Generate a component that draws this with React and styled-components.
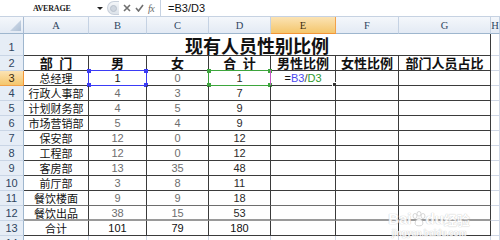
import React from "react";
import styled, { createGlobalStyle, css } from "styled-components";

const GlobalStyle = createGlobalStyle`
  html, body { margin: 0; padding: 0; background: #fff; overflow: hidden; }
  #root { width: 500px; height: 240px; }
`;

const Window = styled.div`
  width: 500px;
  height: 240px;
  overflow: hidden;
  position: relative;
  background: #fff;
  font-family: "Liberation Sans", "Noto Sans CJK SC", sans-serif;
`;

/* ---------- formula bar ---------- */
const FormulaBar = styled.div`
  display: flex;
  height: 17px;
  box-sizing: border-box;
  border-bottom: 1px solid #c6d2e2;
  background: #fff;
`;

const NameBox = styled.div`
  width: 106px;
  display: flex;
  align-items: center;
  box-sizing: border-box;
  padding-left: 33px;
  font-family: "Liberation Serif", serif;
  font-size: 8px;
  font-weight: bold;
  letter-spacing: -0.2px;
  color: #222;
  position: relative;
`;

const DropArrow = styled.span`
  position: absolute;
  left: 97px;
  top: 7px;
  width: 0;
  height: 0;
  border-left: 3px solid transparent;
  border-right: 3px solid transparent;
  border-top: 3px solid #222;
`;

const ButtonArea = styled.div`
  width: 54px;
  display: flex;
  align-items: center;
  gap: 4px;
  box-sizing: border-box;
  padding-left: 1px;
`;

const Grip = styled.div`
  width: 12px;
  height: 14px;
  border-radius: 7px 0 0 7px;
  background: linear-gradient(#f4f6f9, #dde3ea);
  border: 1px solid #c9d1dc;
  border-right: none;
  box-sizing: border-box;
  display: flex;
  align-items: center;
  justify-content: center;
  &::after {
    content: "";
    width: 5px;
    height: 5px;
    border-radius: 50%;
    background: #cfd6df;
    border: 1px solid #b9c2cd;
  }
`;

const IconSvg = styled.svg`
  display: block;
  flex: none;
`;

const FxText = styled.span`
  font-family: "Liberation Serif", serif;
  font-style: italic;
  font-size: 10px;
  color: #6a6a6a;
  letter-spacing: -0.5px;
`;

const FormulaInput = styled.div`
  flex: 1;
  border-left: 1px solid #c6d2e2;
  padding-left: 7px;
  font-size: 11px;
  line-height: 16px;
  color: #111;
`;

/* ---------- sheet ---------- */
const Sheet = styled.div`
  display: grid;
  grid-template-columns: 24px 65px 58px 62px 62px 65px 63px 92px 1fr;
  grid-template-rows: 17px 22px repeat(13, 15px);
  position: relative;
`;

const headerBg = css`
  background: linear-gradient(#f4f7fb, #e3eaf4);
  color: #2f4560;
`;

const activeHeader = css`
  background: linear-gradient(#fbe3b4, #f4c66c);
  color: #3a2c10;
`;

const Corner = styled.div`
  ${headerBg};
  box-sizing: border-box;
  border-right: 1px solid #a9bcd3;
  border-bottom: 1px solid #9eb6ce;
  position: relative;
  &::after {
    content: "";
    position: absolute;
    right: 2px;
    bottom: 2px;
    width: 11px;
    height: 11px;
    background: linear-gradient(135deg, #d9e3ef, #aebfd4);
    clip-path: polygon(100% 0, 100% 100%, 0 100%);
  }
`;

const ColHeader = styled.div`
  ${(p) => (p.$active ? activeHeader : headerBg)};
  box-sizing: border-box;
  border-right: 1px solid ${(p) => (p.$active ? "#f2a14a" : "#c5d2e3")};
  border-bottom: 1px solid ${(p) => (p.$active ? "#f29536" : "#9eb6ce")};
  display: flex;
  align-items: center;
  justify-content: center;
  font-family: "Liberation Serif", serif;
  font-size: 10.5px;
`;

const RowHeader = styled.div`
  ${(p) => (p.$active ? activeHeader : headerBg)};
  background: ${(p) => (p.$active ? "linear-gradient(#fbe3b4, #f4c66c)" : "#e6edf6")};
  box-sizing: border-box;
  border-right: 1px solid ${(p) => (p.$active ? "#f29536" : "#9eb6ce")};
  border-bottom: 1px solid ${(p) => (p.$active ? "#f2a14a" : "#c9d5e5")};
  display: flex;
  align-items: ${(p) => (p.$tall ? "flex-end" : "center")};
  justify-content: center;
  font-size: 11px;
  line-height: 14px;
  padding-bottom: ${(p) => (p.$tall ? "1px" : "0")};
  overflow: hidden;
`;

const Cell = styled.div`
  box-sizing: border-box;
  border-right: 1px solid ${(p) => (p.$table ? "#3b3b3b" : "#d0d7e5")};
  border-bottom: ${(p) =>
    p.$bottom ? p.$bottom : `1px solid ${p.$table ? "#3b3b3b" : "#d0d7e5"}`};
  display: flex;
  align-items: center;
  justify-content: center;
  white-space: pre;
  font-size: ${(p) => (p.$head ? "13px" : "11px")};
  font-weight: ${(p) => (p.$head ? 600 : 400)};
  line-height: 14px;
  color: ${(p) => p.$color || "#111"};
  position: relative;
`;

const CjkText = styled.span`
  font-family: "Noto Sans CJK SC", sans-serif;
  font-size: ${(p) => p.$size || "11px"};
  line-height: 14px;
`;

const TitleCell = styled.div`
  grid-column: span 7;
  box-sizing: border-box;
  border-right: 1px solid #3b3b3b;
  border-bottom: 1px solid #3b3b3b;
  display: flex;
  align-items: flex-end;
  justify-content: center;
  font-family: "Noto Sans CJK SC", sans-serif;
  font-weight: 700;
  font-size: 18px;
  line-height: 20px;
  color: #111;
`;

const RangeBox = styled.div`
  position: absolute;
  left: -1px;
  top: -1px;
  right: -1px;
  bottom: -1px;
  border: 1px solid ${(p) => p.$color};
  pointer-events: none;
`;

const Handle = styled.span`
  position: absolute;
  width: 4px;
  height: 4px;
  background: ${(p) => p.$color};
  ${(p) => (p.$top ? "top: -2px;" : "bottom: -2px;")}
  ${(p) => (p.$left ? "left: -2px;" : "right: -2px;")}
`;

const ActiveBox = styled.div`
  position: absolute;
  left: -1px;
  top: -1px;
  right: 0;
  bottom: 0;
  border-left: 1px solid #c45ac4;
  pointer-events: none;
`;

const FillHandle = styled.span`
  position: absolute;
  right: -2px;
  bottom: -2px;
  width: 3px;
  height: 3px;
  background: #333;
  border: 1px solid #fff;
`;

const Ref = styled.span`
  color: ${(p) => p.$color};
`;

const Watermark = styled.div`
  position: absolute;
  left: 383px;
  top: 193px;
  width: 92px;
  display: flex;
  flex-direction: column;
  align-items: center;
  pointer-events: none;
  color: #fff;
  text-shadow: 0 0 1px #c4c4c4, 0 0 1px #c4c4c4;
  opacity: 0.85;
`;

const WmMain = styled.div`
  display: flex;
  align-items: flex-end;
  font-family: "Liberation Sans", "Noto Sans CJK SC", sans-serif;
  font-weight: bold;
  font-size: 15px;
  line-height: 17px;
`;

const WmSub = styled.div`
  font-size: 8.5px;
  font-weight: bold;
  line-height: 12px;
  font-family: "Liberation Sans", sans-serif;
`;

const RangeOverlay = ({ color }) => (
  <RangeBox $color={color}>
    <Handle $color={color} $top $left />
    <Handle $color={color} $top />
    <Handle $color={color} $left />
    <Handle $color={color} />
  </RangeBox>
);

const data = [
  ["总经理", 1, 0, 1],
  ["行政人事部", 4, 3, 7],
  ["计划财务部", 4, 5, 9],
  ["市场营销部", 5, 4, 9],
  ["保安部", 12, 0, 12],
  ["工程部", 12, 0, 12],
  ["客房部", 13, 35, 48],
  ["前厅部", 3, 8, 11],
  ["餐饮楼面", 9, 9, 18],
  ["餐饮出品", 38, 15, 53],
  ["合计", 101, 79, 180],
];

const heads = ["部\u2002门", "男", "女", "合\u2002计", "男性比例", "女性比例", "部门人员占比"];
const letters = ["A", "B", "C", "D", "E", "F", "G", "H"];

function bottomFor(rowIdx) {
  if (rowIdx === 11) return "1px solid #6e6e6e";
  if (rowIdx === 12) return "2px solid #9a9a9a";
  return undefined;
}

export default function App() {
  return (
    <Window>
      <GlobalStyle />
      <FormulaBar>
        <NameBox>
          AVERAGE
          <DropArrow />
        </NameBox>
        <ButtonArea>
          <Grip />
          <IconSvg width="8" height="8" viewBox="0 0 8 8">
            <path d="M1 1 L7 7 M7 1 L1 7" stroke="#6f6f6f" strokeWidth="1.6" />
          </IconSvg>
          <IconSvg width="9" height="8" viewBox="0 0 9 8">
            <path d="M1 4 L3.5 7 L8 1" stroke="#6f6f6f" strokeWidth="1.6" fill="none" />
          </IconSvg>
          <FxText>fx</FxText>
        </ButtonArea>
        <FormulaInput>=B3/D3</FormulaInput>
      </FormulaBar>

      <Sheet>
        <Corner />
        {letters.map((l) => (
          <ColHeader key={l} $active={l === "E"}>
            {l}
          </ColHeader>
        ))}

        <RowHeader $tall>1</RowHeader>
        <TitleCell>现有人员性别比例</TitleCell>
        <Cell />

        <RowHeader>2</RowHeader>
        {heads.map((h) => (
          <Cell key={h} $table $head>
            <CjkText $size="13px">{h}</CjkText>
          </Cell>
        ))}
        <Cell />

        {data.map((r, i) => {
          const rowNo = i + 3;
          const isTotal = rowNo === 13;
          const bottom = bottomFor(rowNo);
          return (
            <React.Fragment key={rowNo}>
              <RowHeader $active={rowNo === 3}>{rowNo}</RowHeader>
              <Cell $table $bottom={bottom}>
                <CjkText>{r[0]}</CjkText>
              </Cell>
              <Cell
                $table
                $bottom={bottom}
                $color={isTotal || rowNo === 3 ? "#111" : "#6e6e6e"}
              >
                {r[1]}
                {rowNo === 3 && <RangeOverlay color="#3b3bf5" />}
              </Cell>
              <Cell $table $bottom={bottom} $color={isTotal ? "#111" : "#6e6e6e"}>
                {r[2]}
              </Cell>
              <Cell $table $bottom={bottom} $color={isTotal ? "#111" : "#2a2a2a"}>
                {r[3]}
                {rowNo === 3 && <RangeOverlay color="#3da53d" />}
              </Cell>
              <Cell $table $bottom={bottom}>
                {rowNo === 3 && (
                  <>
                    <span>
                      =<Ref $color="#4a4af0">B3</Ref>
                      <Ref $color="#444">/</Ref>
                      <Ref $color="#2f9a2f">D3</Ref>
                    </span>
                    <ActiveBox>
                      <FillHandle />
                    </ActiveBox>
                  </>
                )}
              </Cell>
              <Cell $table $bottom={bottom} />
              <Cell $table $bottom={bottom} />
              <Cell />
            </React.Fragment>
          );
        })}

        <RowHeader>14</RowHeader>
        {letters.map((l) => (
          <Cell key={"r14" + l} />
        ))}

        <Watermark>
          <WmMain>
            Bai
            <IconSvg width="14" height="16" viewBox="0 0 14 16">
              <g fill="#fff" stroke="#c4c4c4" strokeWidth="0.8">
                <ellipse cx="3" cy="5" rx="2" ry="2.5" />
                <ellipse cx="7" cy="2.8" rx="2" ry="2.3" />
                <ellipse cx="11" cy="5" rx="2" ry="2.5" />
                <path d="M7 7 C3 9 2 13 4.5 14.5 C6 15 8 15 9.5 14.5 C12 13 11 9 7 7 Z" />
              </g>
            </IconSvg>
            du
            <CjkText $size="13px">经验</CjkText>
          </WmMain>
          <WmSub>jingyan.baidu.com</WmSub>
        </Watermark>
      </Sheet>
    </Window>
  );
}
